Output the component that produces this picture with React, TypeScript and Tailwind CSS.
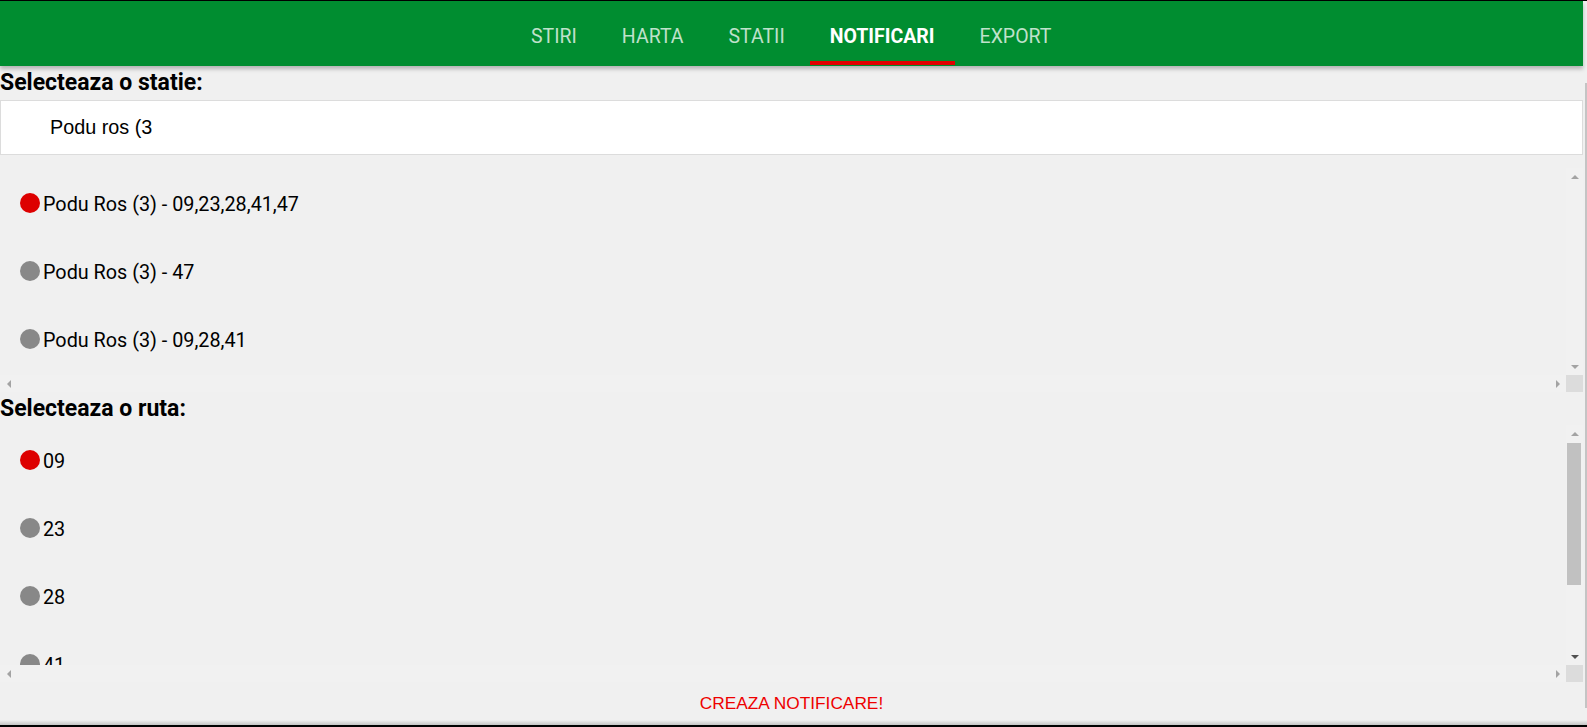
import React from 'react';

const tabs = ['STIRI', 'HARTA', 'STATII', 'NOTIFICARI', 'EXPORT'];

const stations = [
  { label: 'Podu Ros (3) - 09,23,28,41,47', active: true },
  { label: 'Podu Ros (3) - 47', active: false },
  { label: 'Podu Ros (3) - 09,28,41', active: false },
];

const routes = [
  { label: '09', active: true },
  { label: '23', active: false },
  { label: '28', active: false },
  { label: '41', active: false },
  { label: '47', active: false },
];

// small scrollbar arrow
const Arrow = ({ dir, dark }: { dir: 'up' | 'down' | 'left' | 'right'; dark?: boolean }) => {
  const pts = {
    up: '0,4 4,0 8,4',
    down: '0,0 8,0 4,4',
    left: '4,0 4,8 0,4',
    right: '0,0 0,8 4,4',
  }[dir];
  const vertical = dir === 'up' || dir === 'down';
  return (
    <svg width={vertical ? 8 : 4} height={vertical ? 4 : 8} viewBox={vertical ? '0 0 8 4' : '0 0 4 8'}>
      <polygon points={pts} fill={dark ? '#505050' : '#a3a3a3'} />
    </svg>
  );
};

const VScroll = ({ thumb }: { thumb?: boolean }) => (
  <div className="flex flex-col w-[17px] bg-[#f1f1f1]">
    <div className="h-[17px] flex items-center justify-center">
      <Arrow dir="up" />
    </div>
    <div className="flex-1 pt-[1px]">
      {thumb && <div className="ml-[1px] w-[14px] h-[142px] bg-[#c1c1c1]" />}
    </div>
    <div className="h-[17px] flex items-center justify-center">
      <Arrow dir="down" dark={thumb} />
    </div>
  </div>
);

const HScroll = () => (
  <div className="flex h-[17px] bg-[#f1f1f1]">
    <div className="w-[17px] flex items-center justify-center">
      <Arrow dir="left" />
    </div>
    <div className="flex-1" />
    <div className="w-[17px] flex items-center justify-center">
      <Arrow dir="right" />
    </div>
    <div className="w-[17px] bg-[#dcdcdc]" />
  </div>
);

const Item = ({ label, active }: { label: string; active: boolean }) => (
  <div className="h-[68px] shrink-0 flex items-center pl-[20px]">
    <span
      className={
        'w-[20px] h-[20px] rounded-full mb-[5px] mr-[3px] shrink-0 ' +
        (active ? 'bg-[#dd0000]' : 'bg-[#888888]')
      }
    />
    <span className="text-[19.8px] text-black leading-none whitespace-nowrap">{label}</span>
  </div>
);

const ScrollList = ({ items, height, thumb }: { items: { label: string; active: boolean }[]; height: string; thumb?: boolean }) => (
  <div className={'flex flex-col ' + height}>
    <div className="flex flex-1 min-h-0">
      <div className="flex-1 flex flex-col overflow-hidden pt-[3px]">
        {items.map((it) => (
          <Item key={it.label} {...it} />
        ))}
      </div>
      <VScroll thumb={thumb} />
    </div>
    <HScroll />
  </div>
);

export default function App() {
  return (
    <div
      className="w-[1587px] h-[727px] flex flex-col bg-[#f0f0f0] border-t border-black overflow-hidden"
      style={{ fontFamily: 'Roboto, "Liberation Sans", sans-serif' }}
    >
      <div className="flex flex-1 min-h-0">
        <div className="w-[1583px] flex flex-col">
          <header className="h-[65px] shrink-0 bg-[#008d30] flex pl-[511px] gap-[5px] shadow-[0_3px_4px_rgba(0,0,0,0.25)] relative z-10">
            {tabs.map((t) => {
              const active = t === 'NOTIFICARI';
              return (
                <div key={t} className="flex flex-col h-[64px] px-[20px]">
                  <div
                    className={
                      'flex-1 flex items-center text-[19.5px] pt-[11px] ' +
                      (active ? 'text-white font-bold' : 'text-white/75')
                    }
                  >
                    {t}
                  </div>
                  <div className={'h-[4px] -mx-[20px] ' + (active ? 'bg-[#e00000]' : '')} />
                </div>
              );
            })}
          </header>

          <div className="h-[34px] flex items-center font-bold text-[23px] text-black">Selecteaza o statie:</div>
          <div
            className="h-[55px] bg-white border border-[#dcdcdc] flex items-center pl-[49px] text-[19.8px] text-black"
            style={{ fontFamily: '"Liberation Sans", Arial, sans-serif' }}
          >
            Podu ros (3
          </div>
          <div className="h-[13px]" />
          <ScrollList items={stations} height="h-[224px]" />

          <div className="h-[33px] flex items-center font-bold text-[23px] text-black pt-[1px]">Selecteaza o ruta:</div>
          <ScrollList items={routes} height="h-[257px]" thumb />

          <div
            className="h-[38px] flex items-center justify-center pt-[6px] text-[17.3px] text-[#ee0000]"
            style={{ fontFamily: '"Liberation Sans", Arial, sans-serif' }}
          >
            CREAZA NOTIFICARE!
          </div>
        </div>
        <div className="w-[4px] flex flex-col pt-[82px]">
          <div className="ml-[2px] w-[2px] h-[625px] bg-[#c4c4c4]" />
        </div>
      </div>
      <div className="h-[5px] shrink-0 bg-gradient-to-b from-[#f0f0f0] to-[#c4c4c4]" />
      <div className="h-[2px] shrink-0 bg-black" />
    </div>
  );
}
